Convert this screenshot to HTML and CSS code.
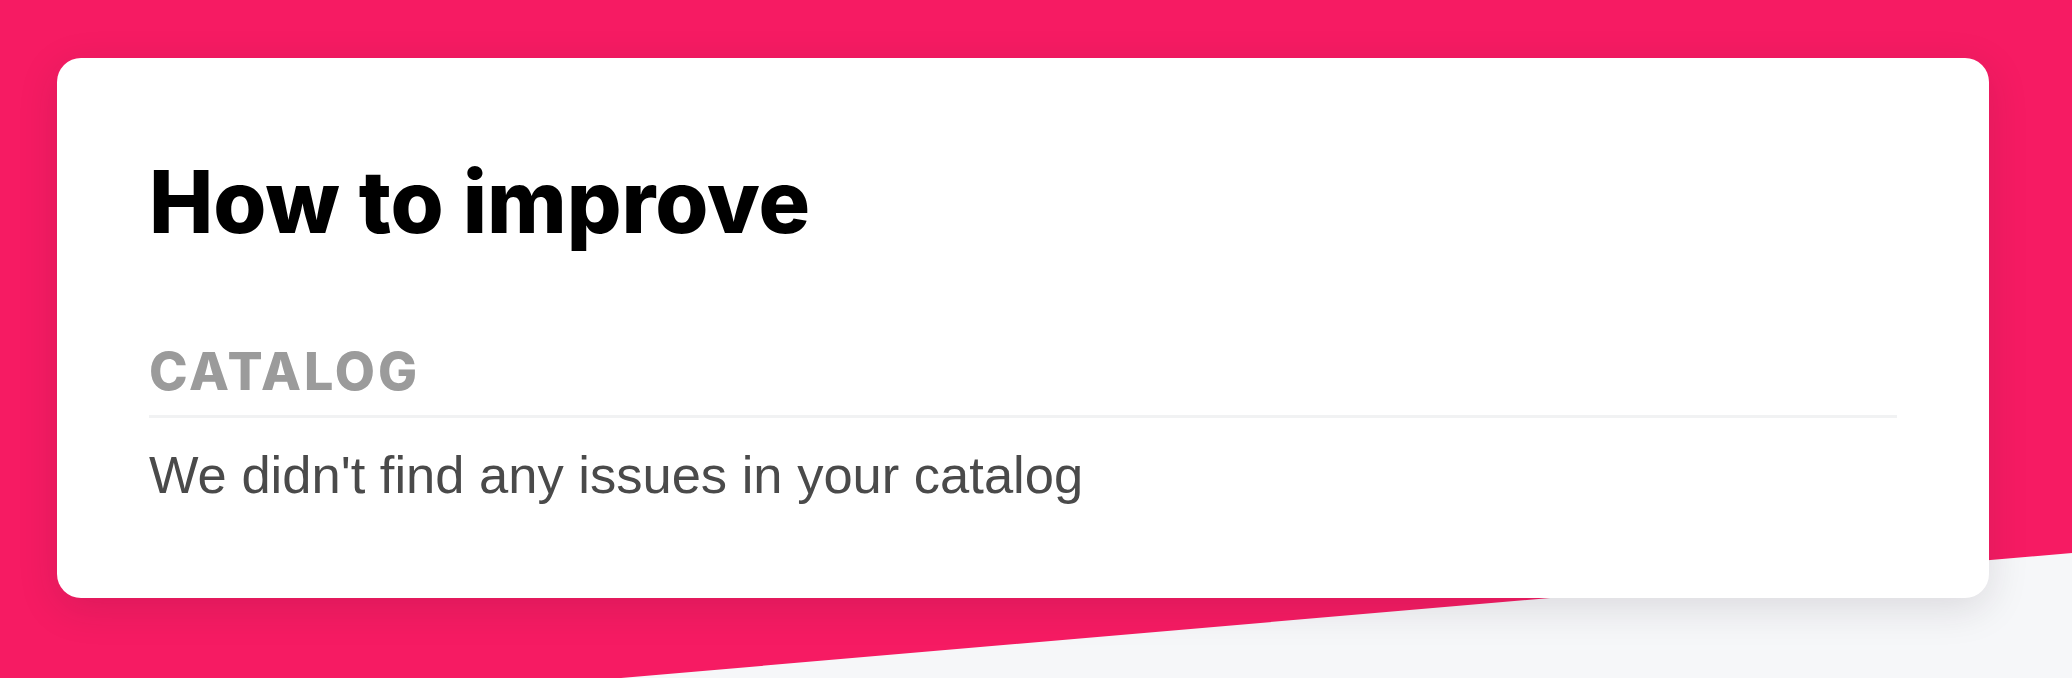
FILE: index.html
```html
<!DOCTYPE html>
<html lang="en">
<head>
<meta charset="utf-8">
<title>How to improve</title>
<link rel="stylesheet" href="styles.css">
</head>
<body>
<div class="page">
  <div class="backdrop"></div>
  <section class="card">
    <h1 class="card-title">How to improve</h1>
    <div class="section">
      <h2 class="section-label">CATALOG</h2>
      <p class="section-text">We didn't find any issues in your catalog</p>
    </div>
  </section>
</div>
</body>
</html>
```
FILE: styles.css
```css
html, body {
  margin: 0;
  padding: 0;
}

body {
  width: 2072px;
  height: 678px;
  overflow: hidden;
  background: #f61b63;
  font-family: "Liberation Sans", Arial, sans-serif;
}

.page {
  position: relative;
  width: 2072px;
  height: 678px;
  padding: 58px 83px 0 57px;
  box-sizing: border-box;
}

.backdrop {
  position: absolute;
  inset: 0;
  background: #f6f7f9;
  clip-path: polygon(621px 678px, 2072px 553px, 2072px 678px);
}

.card {
  position: relative;
  background: #ffffff;
  border-radius: 24px;
  padding: 101px 92px 96px;
  box-shadow: 0 10px 40px rgba(40, 20, 40, 0.13);
}

.card-title {
  margin: 0;
  font-family: Inter, "Liberation Sans", sans-serif;
  font-size: 86px;
  line-height: 1;
  font-weight: 800;
  letter-spacing: 0;
  color: #000000;
}

.section {
  margin-top: 101px;
}

.section-label {
  margin: 0;
  padding-bottom: 17px;
  border-bottom: 3px solid #f1f2f3;
  font-family: Inter, "Liberation Sans", sans-serif;
  font-size: 52px;
  line-height: 1;
  font-weight: 800;
  letter-spacing: 3px;
  color: #9b9b9b;
}

.section-text {
  margin: 31px 0 0;
  font-size: 52.5px;
  line-height: 1;
  font-weight: 400;
  color: #4a4a4a;
}
```
